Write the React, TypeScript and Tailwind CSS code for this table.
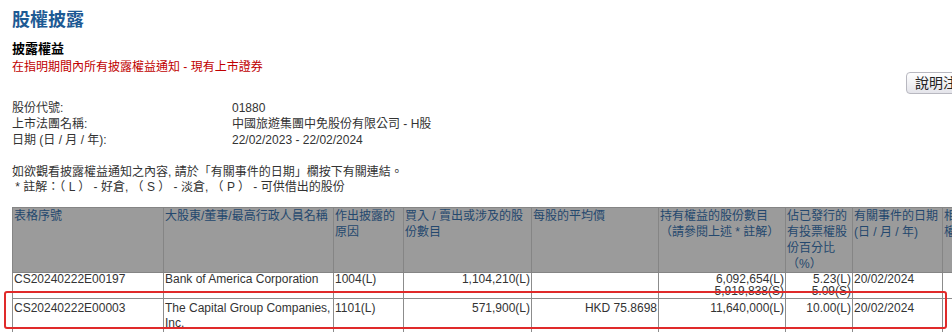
import React from 'react'

const FONT = 'font-["Liberation_Sans","Noto_Sans_CJK_TC",sans-serif]'

const COLS = [151, 170, 70, 128, 127, 127, 67, 90, 80]

const HEADERS: React.ReactNode[] = [
  '表格序號',
  '大股東/董事/最高行政人員名稱',
  <>作出披露的<br />原因</>,
  <>買入 / 賣出或涉及的股<br />份數目</>,
  '每股的平均價',
  <>持有權益的股份數目<br />（請參閱上述 * 註解）</>,
  <>佔已發行的<br />有投票權股<br />份百分比<br />（%）</>,
  <>有關事件的日期<br />(日 / 月 / 年)</>,
  <>相關法團<br />權益/淡倉</>,
]

const INFO = [
  { label: '股份代號:', value: '01880' },
  { label: '上市法團名稱:', value: '中國旅遊集團中免股份有限公司 - H股' },
  { label: '日期 (日 / 月 / 年):', value: '22/02/2023 - 22/02/2024' },
]

export default function App() {
  const td = 'border border-[#8c8c8c] align-top px-px text-[12px] text-[#333]'
  return (
    <div className={`relative w-[952px] h-[332px] overflow-hidden bg-white ${FONT}`}>
      <div className="pl-3 pt-[9px]">
        <h1 className="text-[18px] leading-[22px] font-bold text-[#1d5a94]">股權披露</h1>
        <h2 className="mt-[10px] text-[13px] leading-[16px] font-bold text-black">披露權益</h2>
        <p className="mt-[3px] text-[12px] leading-[14px] text-[#c00000]">在指明期間內所有披露權益通知 - 現有上市證券</p>

        <div className="flex justify-end -mr-[28px] -mt-[2px]">
          <button className="h-[22px] px-[8px] rounded-[4px] border border-[#b8b8c0] bg-gradient-to-b from-white to-[#e4e4ea] text-[14px] leading-[20px] text-[#222]">
            說明注釋
          </button>
        </div>

        <div className="mt-[6px] text-[12px] leading-[16px] text-[#333]">
          {INFO.map((r) => (
            <div key={r.label} className="flex">
              <span className="w-[220px]">{r.label}</span>
              <span>{r.value}</span>
            </div>
          ))}
        </div>

        <div className="mt-[17px] text-[12px] leading-[15px] text-[#333]">
          <p>如欲觀看披露權益通知之內容, 請於「有關事件的日期」欄按下有關連結。</p>
          <p>&nbsp;* 註解：（ L ） - 好倉, （ S ） - 淡倉, （ P ） - 可供借出的股份</p>
        </div>

        {/* 表格 */}
        <table className="mt-[12px] table-fixed border-collapse w-[1010px]">
          <thead>
            <tr className="h-[64px] bg-[#9b9b9b]">
              {HEADERS.map((h, i) => (
                <th key={i} style={{ width: COLS[i] }} className="border border-[#858585] align-top text-left font-normal px-px text-[12px] leading-[16px] text-[#24486e] whitespace-nowrap overflow-hidden">{h}</th>
              ))}
            </tr>
          </thead>
          <tbody className="leading-[12px]">
            <tr className="h-[26px]">
              <td className={td}>CS20240222E00197</td>
              <td className={`${td} text-[#1f3a60]`}>Bank of America Corporation</td>
              <td className={td}>1004(L)</td>
              <td className={`${td} text-right`}>1,104,210(L)</td>
              <td className={td}></td>
              <td className={`${td} text-right`}>6,092,654(L)<br />5,919,838(S)</td>
              <td className={`${td} text-right`}>5.23(L)<br />5.09(S)</td>
              <td className={td}>20/02/2024</td>
              <td className={td}></td>
            </tr>
            <tr className="h-[34px] leading-[15px]">
              <td className={`${td} pt-[2px]`}>CS20240222E00003</td>
              <td className={`${td} pt-[2px] text-[#1f3a60]`}>The Capital Group Companies, Inc.</td>
              <td className={`${td} pt-[2px]`}>1101(L)</td>
              <td className={`${td} pt-[2px] text-right`}>571,900(L)</td>
              <td className={`${td} pt-[2px] text-right`}>HKD 75.8698</td>
              <td className={`${td} pt-[2px] text-right`}>11,640,000(L)</td>
              <td className={`${td} pt-[2px] text-right`}>10.00(L)</td>
              <td className={`${td} pt-[2px]`}>20/02/2024</td>
              <td className={td}></td>
            </tr>
          </tbody>
        </table>
      </div>

      {/* 紅框標示 */}
      <div className="absolute left-[4px] top-[291px] w-[943px] h-[38px] border-2 border-[#e02a2a] rounded-[3px] pointer-events-none" />
    </div>
  )
}
